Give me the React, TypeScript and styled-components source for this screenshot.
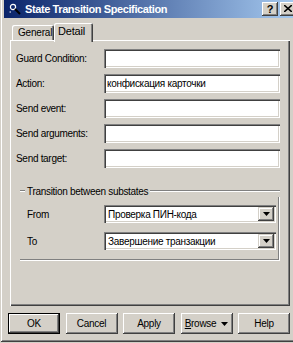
import React from "react";
import styled, { createGlobalStyle } from "styled-components";

const Global = createGlobalStyle`
  html, body { margin: 0; padding: 0; background: #d4d0c8; overflow: hidden; }
  body { font-family: "Liberation Sans", Arial, sans-serif; }
  * { box-sizing: border-box; }
`;

const Window = styled.div`
  width: 300px;
  height: 346px;
  margin-top: -4px;
  padding: 4px;
  background: #d4d0c8;
  box-shadow: inset 1px 1px #d4d0c8, inset -1px -1px #404040, inset 2px 2px #ffffff,
    inset -2px -2px #808080;
  display: flex;
  flex-direction: column;
`;

const TitleBar = styled.div`
  height: 18px;
  flex: none;
  display: flex;
  align-items: center;
  padding-left: 5px;
  background: linear-gradient(to right, #0a246a, #a6caf0);
`;

const TitleText = styled.div`
  flex: 1;
  color: #ffffff;
  font-weight: bold;
  font-size: 11px;
  letter-spacing: -0.4px;
  white-space: nowrap;
`;

const CaptionButtons = styled.div`
  display: flex;
  gap: 2px;
`;

const CaptionButton = styled.div`
  width: 16px;
  height: 14px;
  background: #d4d0c8;
  box-shadow: inset -1px -1px #404040, inset 1px 1px #ffffff, inset -2px -2px #808080;
  display: flex;
  align-items: center;
  justify-content: center;
  font-weight: bold;
  font-size: 11px;
  color: #000;
  padding-bottom: 1px;
`;

const TabStrip = styled.div`
  height: 17px;
  margin-top: 5px;
  flex: none;
  display: flex;
  align-items: flex-end;
  padding-left: 8px;
`;

const Tab = styled.div<{ $active?: boolean; $w: number }>`
  width: ${(p) => p.$w}px;
  height: ${(p) => (p.$active ? 19 : 15)}px;
  margin-bottom: ${(p) => (p.$active ? -2 : 0)}px;
  position: relative;
  z-index: ${(p) => (p.$active ? 1 : 0)};
  background: #d4d0c8;
  border-radius: 2px 2px 0 0;
  box-shadow: inset 1px 1px #ffffff, inset -1px 0 #404040, inset -2px 0 #808080;
  font-size: ${(p) => (p.$active ? 11 : 10)}px;
  letter-spacing: -0.2px;
  color: #000;
  padding-left: ${(p) => (p.$active ? 4 : 6)}px;
  padding-top: ${(p) => (p.$active ? 2 : 2)}px;
  white-space: nowrap;
`;

const Panel = styled.div`
  flex: 1;
  margin: 0 6px;
  padding: 9px 10px 0 6px;
  background: #d4d0c8;
  box-shadow: inset 1px 1px #ffffff, inset -1px -1px #404040, inset -2px -2px #808080;
  display: flex;
  flex-direction: column;
`;

const FieldGrid = styled.div<{ $cols: string; $gap: number }>`
  display: grid;
  grid-template-columns: ${(p) => p.$cols};
  grid-auto-rows: auto;
  row-gap: ${(p) => p.$gap}px;
  align-items: center;
`;

const Label = styled.div`
  font-size: 10px;
  letter-spacing: -0.3px;
  color: #000;
  white-space: nowrap;
`;

const Sunken = styled.div<{ $h: number }>`
  height: ${(p) => p.$h}px;
  background: #ffffff;
  box-shadow: inset 1px 1px #808080, inset 2px 2px #404040, inset -1px -1px #ffffff,
    inset -2px -2px #d4d0c8;
  display: flex;
  align-items: center;
  padding: 2px 2px 2px 3px;
  font-size: 10px;
  letter-spacing: -0.3px;
  color: #000;
  white-space: nowrap;
  overflow: hidden;
`;

const ComboText = styled.div`
  flex: 1;
  padding-left: 1px;
`;

const DropButton = styled.div`
  width: 16px;
  height: 14px;
  flex: none;
  background: #d4d0c8;
  box-shadow: inset -1px -1px #404040, inset 1px 1px #d4d0c8, inset -2px -2px #808080,
    inset 2px 2px #ffffff;
  display: flex;
  align-items: center;
  justify-content: center;
`;

const Group = styled.div`
  margin: 17px 0 0 4px;
  display: flex;
  flex-direction: column;
`;

const GroupHeader = styled.div`
  height: 12px;
  display: flex;
  align-items: center;
`;

const EtchedLine = styled.div<{ $w?: number }>`
  height: 2px;
  ${(p) => (p.$w ? `width: ${p.$w}px; flex: none;` : "flex: 1;")}
  border-top: 1px solid #808080;
  border-bottom: 1px solid #ffffff;
`;

const GroupTitle = styled.div`
  font-size: 10px;
  letter-spacing: -0.3px;
  color: #000;
  margin: 0 2px;
  white-space: nowrap;
`;

const GroupBody = styled.div`
  padding: 8px 4px 11px 7px;
  box-shadow: inset -1px -1px #ffffff, inset -2px -2px #808080;
`;

const ButtonRow = styled.div`
  height: 21px;
  margin: 7px 0 4px;
  flex: none;
  padding: 0 6px 0 4px;
  display: flex;
  justify-content: space-between;
`;

const PushButton = styled.div<{ $default?: boolean }>`
  width: 52px;
  height: 21px;
  background: #d4d0c8;
  border: ${(p) => (p.$default ? "1px solid #000" : "none")};
  box-shadow: inset -1px -1px #404040, inset 1px 1px #ffffff, inset -2px -2px #808080;
  display: flex;
  align-items: center;
  justify-content: center;
  gap: 5px;
  font-size: 10px;
  letter-spacing: -0.3px;
  color: #000;
`;

const Mnemonic = styled.span`
  text-decoration: underline;
`;

const MagnifierIcon = () => (
  <svg width="12" height="12" viewBox="0 0 12 12" style={{ flex: "none", marginRight: 4 }}>
    <circle cx="4" cy="4" r="2.6" fill="none" stroke="#ffffff" strokeWidth="1.2" />
    <line x1="6" y1="6" x2="11" y2="11" stroke="#000" strokeWidth="2" />
    <line x1="0.5" y1="9" x2="2" y2="9" stroke="#ffffff" strokeWidth="1" />
  </svg>
);

const CloseGlyph = () => (
  <svg width="8" height="7" viewBox="0 0 8 7">
    <path d="M0 0 L8 7 M8 0 L0 7" stroke="#000" strokeWidth="1.6" />
  </svg>
);

const DownTriangle = () => (
  <svg width="7" height="4" viewBox="0 0 7 4">
    <polygon points="0,0 7,0 3.5,4" fill="#000" />
  </svg>
);

const fields: { label: string; value?: string }[] = [
  { label: "Guard Condition:" },
  { label: "Action:", value: "конфискация карточки" },
  { label: "Send event:" },
  { label: "Send arguments:" },
  { label: "Send target:" },
];

const substates = [
  { label: "From", value: "Проверка ПИН-кода" },
  { label: "To", value: "Завершение транзакции" },
];

export default function App() {
  return (
    <>
      <Global />
      <Window>
        <TitleBar>
          <MagnifierIcon />
          <TitleText>State Transition Specification</TitleText>
          <CaptionButtons>
            <CaptionButton>?</CaptionButton>
            <CaptionButton>
              <CloseGlyph />
            </CaptionButton>
          </CaptionButtons>
        </TitleBar>
        <TabStrip>
          <Tab $w={42}>General</Tab>
          <Tab $w={39} $active>
            Detail
          </Tab>
        </TabStrip>
        <Panel>
          <FieldGrid $cols="88px 176px" $gap={6}>
            {fields.map((f) => (
              <React.Fragment key={f.label}>
                <Label>{f.label}</Label>
                <Sunken $h={19}>{f.value ?? ""}</Sunken>
              </React.Fragment>
            ))}
          </FieldGrid>
          <Group>
            <GroupHeader>
              <EtchedLine $w={5} />
              <GroupTitle>Transition between substates</GroupTitle>
              <EtchedLine />
            </GroupHeader>
            <GroupBody>
              <FieldGrid $cols="77px 172px" $gap={9}>
                {substates.map((s) => (
                  <React.Fragment key={s.label}>
                    <Label>{s.label}</Label>
                    <Sunken $h={18}>
                      <ComboText>{s.value}</ComboText>
                      <DropButton>
                        <DownTriangle />
                      </DropButton>
                    </Sunken>
                  </React.Fragment>
                ))}
              </FieldGrid>
            </GroupBody>
          </Group>
        </Panel>
        <ButtonRow>
          <PushButton $default>OK</PushButton>
          <PushButton>Cancel</PushButton>
          <PushButton>Apply</PushButton>
          <PushButton>
            <span>
              <Mnemonic>B</Mnemonic>rowse
            </span>
            <DownTriangle />
          </PushButton>
          <PushButton>Help</PushButton>
        </ButtonRow>
      </Window>
    </>
  );
}
